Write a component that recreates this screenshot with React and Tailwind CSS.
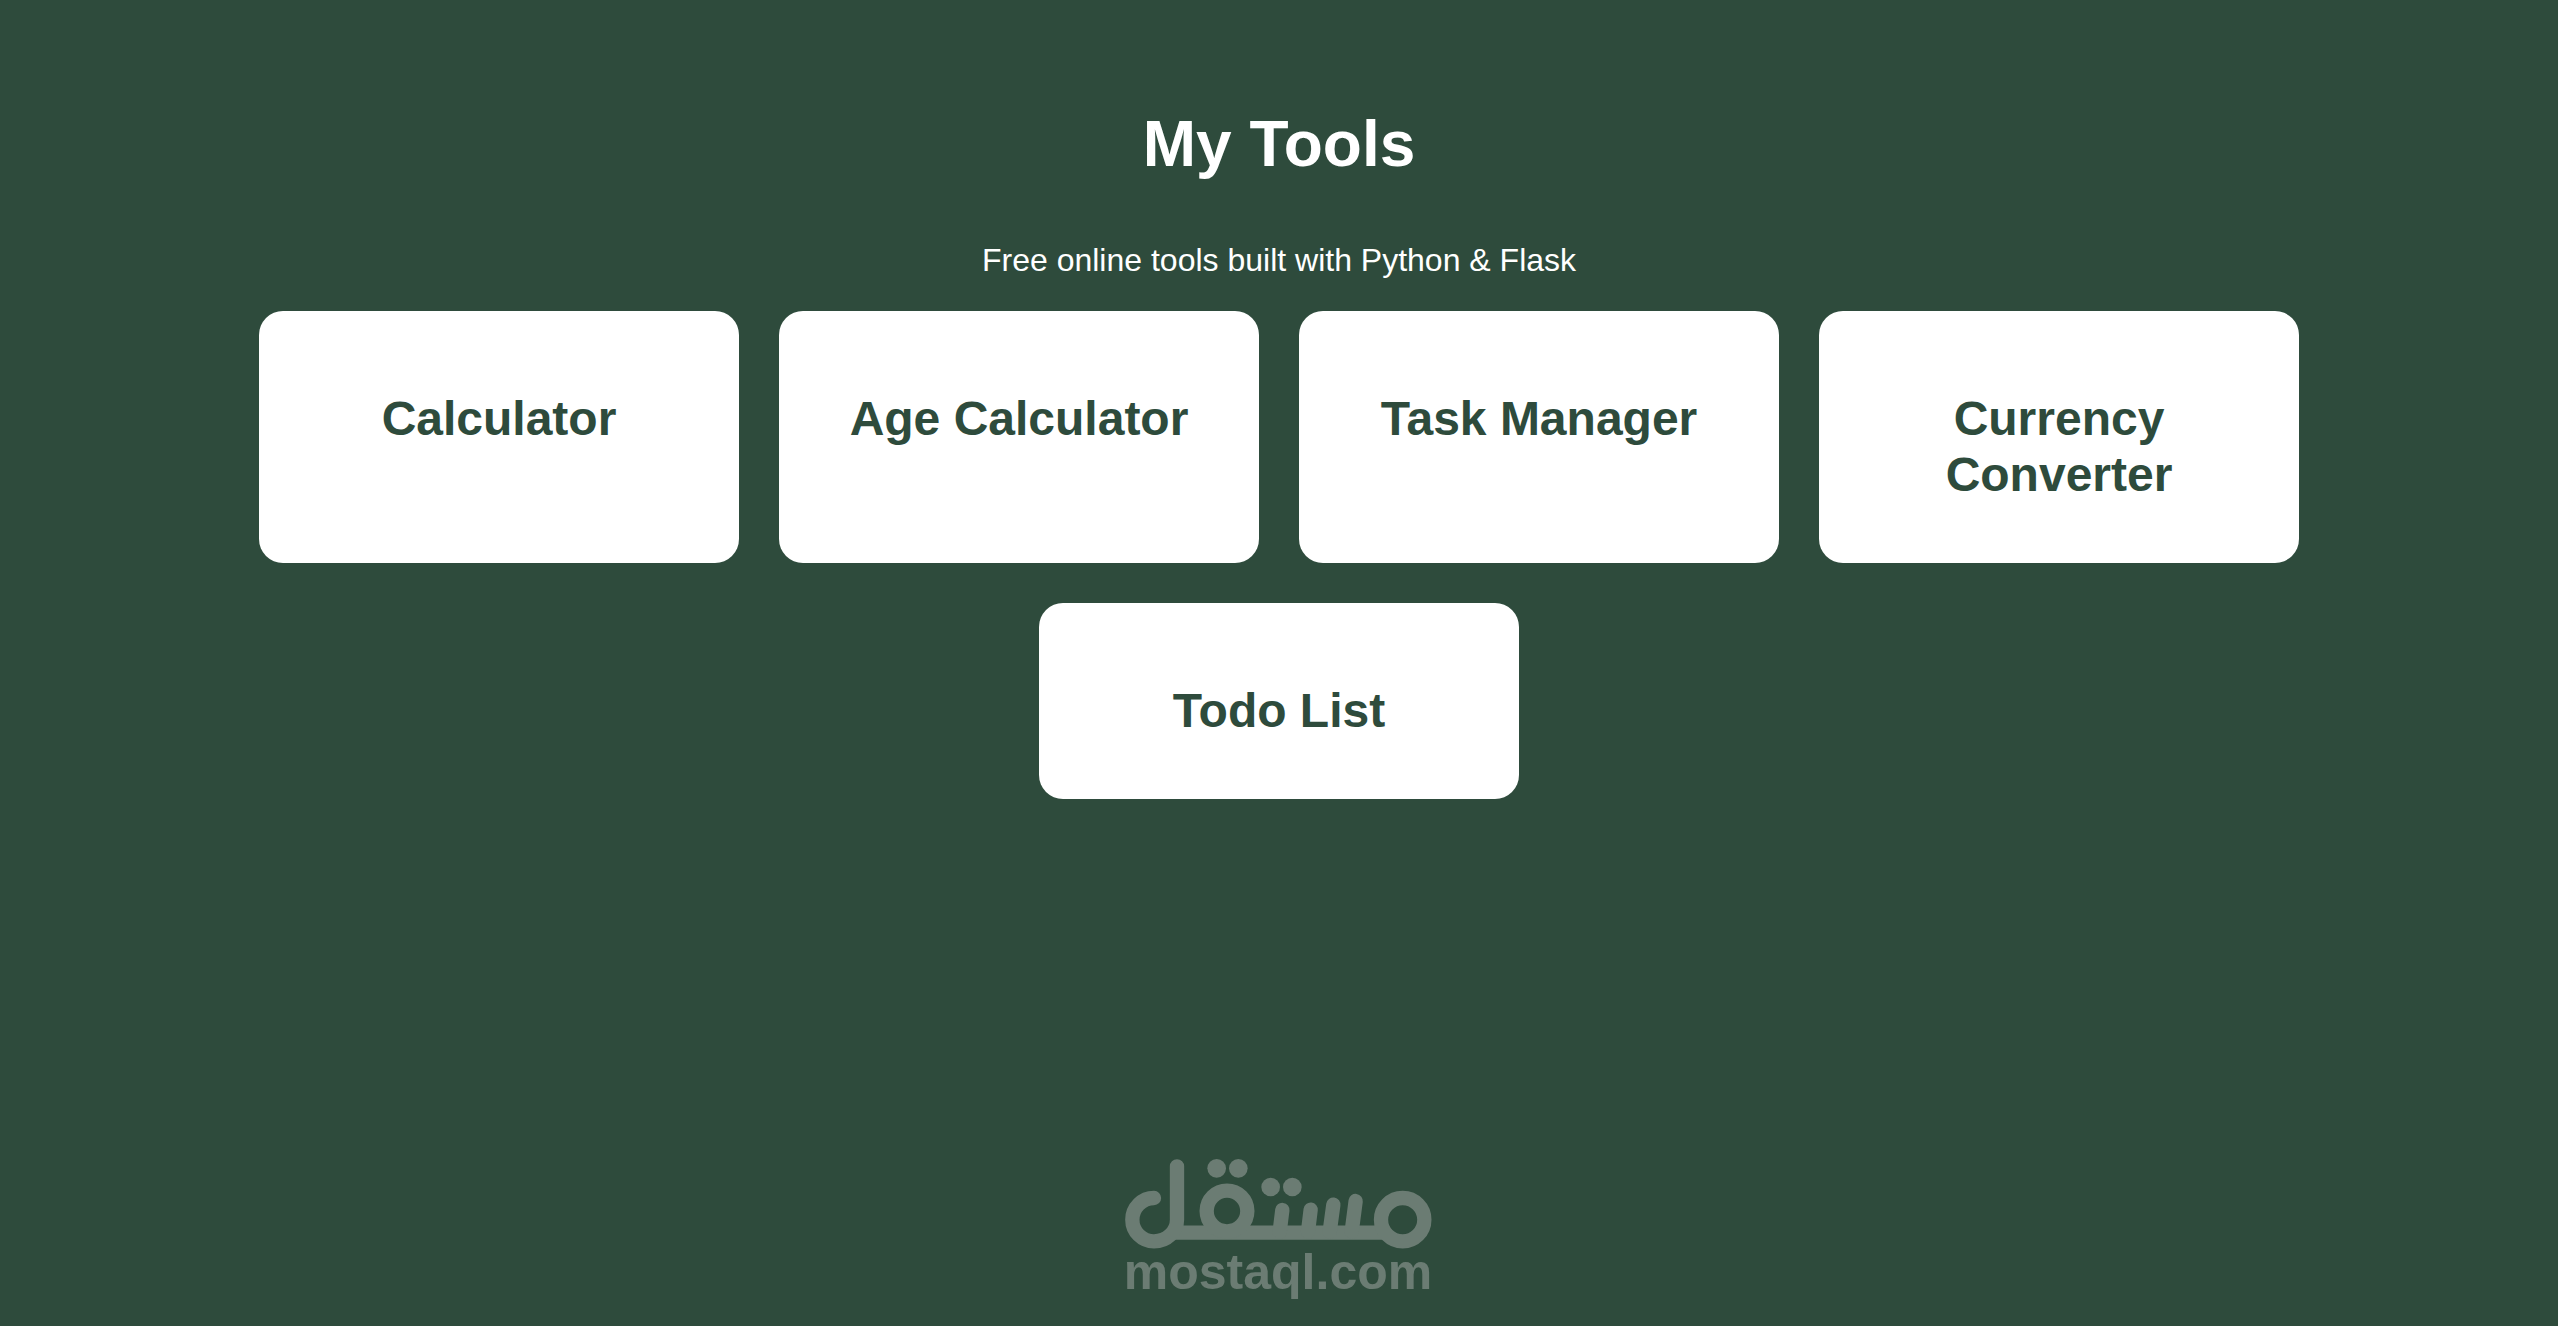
import React from "react";

const tools = [
  { name: "Calculator", href: "#calculator" },
  { name: "Age Calculator", href: "#age-calculator" },
  { name: "Task Manager", href: "#task-manager" },
  { name: "Currency Converter", href: "#currency-converter" },
  { name: "Todo List", href: "#todo-list" },
];

const ToolCard = ({ name, href }) => (
  <a
    href={href}
    className="w-[480px] rounded-3xl bg-white px-10 pt-20 pb-15 text-center text-[#2e4b3c]"
  >
    <h2 className="text-5xl leading-14 font-bold">{name}</h2>
  </a>
);

const MostaqlLogo = () => (
  <svg
    viewBox="69 45 936 438"
    className="w-[312px]"
    fill="none"
    stroke="#6b7c73"
    strokeWidth="43"
    role="img"
    aria-label="mostaql.com"
  >
    {/* Base line and rings */}
    <path d="M215 275H860" />
    <circle cx="908" cy="236" r="65" />
    <circle cx="381" cy="210" r="61" />

    {/* Hook and teeth */}
    <g strokeLinecap="round">
      <path d="M162 171A65 65 0 0 0 162 301A69 65 0 0 0 231 236V76" />
      <path d="M547 207L539 272" />
      <path d="M632 206L624 272" />
      <path d="M700 191L689 272" />
      <path d="M767 180L755 272" />
    </g>

    {/* Dots */}
    <g fill="#6b7c73" stroke="none">
      <circle cx="350" cy="82" r="28" />
      <circle cx="415" cy="82" r="28" />
      <circle cx="512" cy="138" r="28" />
      <circle cx="577" cy="138" r="28" />
    </g>

    <text
      x="534"
      y="445"
      textAnchor="middle"
      fill="#6b7c73"
      stroke="none"
      className="font-['Liberation_Sans',Arial,sans-serif] text-[150px] font-bold"
    >
      mostaql.com
    </text>
  </svg>
);

const App = () => {
  return (
    <div className="flex min-h-screen flex-col items-center bg-[#2e4b3c] font-['Liberation_Sans',Arial,sans-serif] text-white">
      <header className="pt-[106px] text-center">
        <h1 className="text-[64px] leading-[76px] font-bold">My Tools</h1>
        <p className="mt-15 text-[32px] leading-[37px]">
          Free online tools built with Python &amp; Flask
        </p>
      </header>

      <main className="mt-8 flex flex-wrap justify-center gap-10 px-10 xl:px-60">
        {tools.map((tool) => (
          <ToolCard key={tool.name} name={tool.name} href={tool.href} />
        ))}
      </main>

      <footer className="mt-auto pt-10 pb-6">
        <MostaqlLogo />
      </footer>
    </div>
  );
};

export default App;
